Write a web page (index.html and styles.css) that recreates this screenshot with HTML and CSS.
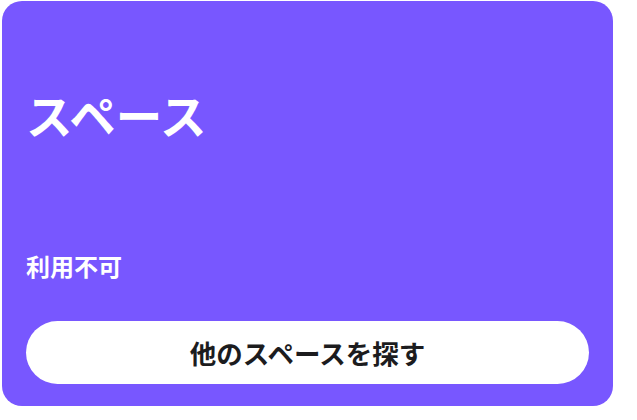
FILE: index.html
```html
<!DOCTYPE html>
<html lang="ja">
<head>
<meta charset="utf-8">
<link rel="stylesheet" href="styles.css">
</head>
<body>
<div class="card">
  <h1 class="title">スペース</h1>
  <div class="spacer"></div>
  <p class="status">利用不可</p>
  <button class="btn">他のスペースを探す</button>
</div>
</body>
</html>
```
FILE: styles.css
```css
html, body {
  margin: 0;
  padding: 0;
  background: #ffffff;
}
body {
  font-family: "Noto Sans CJK JP", "Noto Sans", sans-serif;
}
.card {
  box-sizing: border-box;
  width: 611px;
  height: 405px;
  margin: 1px 0 0 2px;
  background: #7857ff;
  border-radius: 20px;
  padding: 84px 24px 22px 24px;
  display: flex;
  flex-direction: column;
}
.title {
  margin: 0;
  color: #ffffff;
  font-size: 46.5px;
  font-weight: 700;
  line-height: 58px;
}
.spacer {
  flex: 1;
}
.status {
  margin: 0 0 39px 0;
  color: #ffffff;
  font-size: 24px;
  font-weight: 700;
  line-height: 32px;
}
.btn {
  height: 63px;
  width: 100%;
  border: none;
  border-radius: 32px;
  background: #ffffff;
  color: #1c1c1e;
  font-family: "Noto Sans CJK JP", "Noto Sans", sans-serif;
  font-size: 26.5px;
  font-weight: 700;
  padding: 0;
  cursor: pointer;
}
```
